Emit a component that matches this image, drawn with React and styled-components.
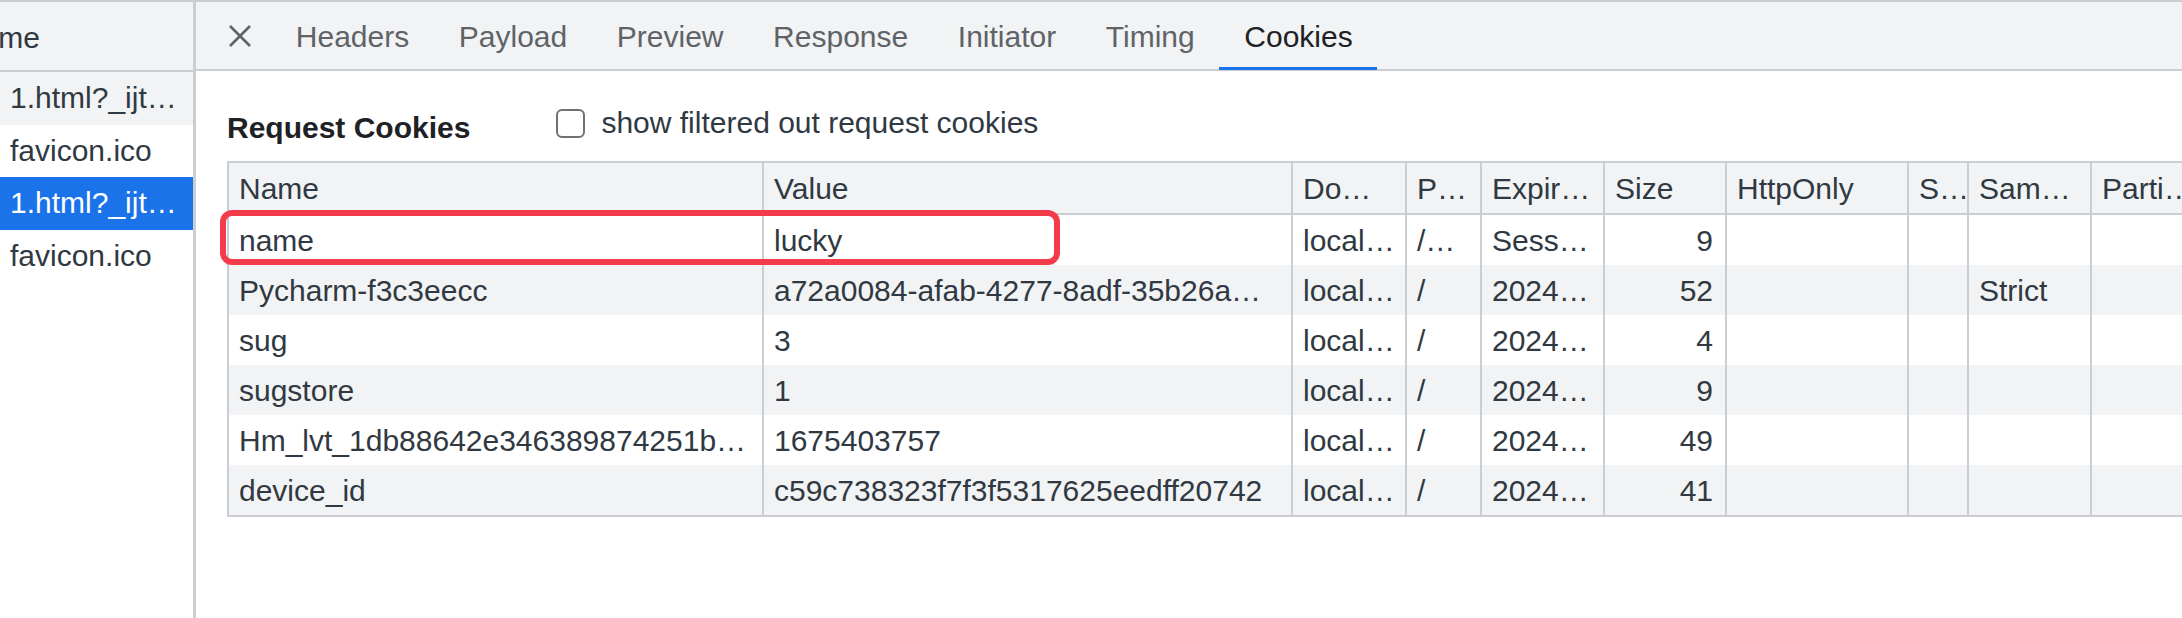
import React from 'react'
import styled, { createGlobalStyle, css } from 'styled-components'

const GlobalStyle = createGlobalStyle`
  html, body {
    margin: 0;
    padding: 0;
    background: #ffffff;
  }
  body {
    font-family: "Liberation Sans", Arial, sans-serif;
    color: #303942;
  }
`

const BORDER = '#cacdd1'
const SURFACE = '#f1f3f4'
const BLUE = '#1a73e8'
const COLUMNS = '535px 529px 114px 75px 123px 122px 182px 60px 123px 123px'

const Window = styled.div`
  display: flex;
  height: 618px;
  border-top: 2px solid ${BORDER};
  box-sizing: border-box;
  overflow: hidden;
  font-size: 30px;
`

const RequestList = styled.div`
  width: 193px;
  flex-shrink: 0;
  border-right: 3px solid ${BORDER};
  overflow: hidden;
`

const ListHeader = styled.div`
  height: 68px;
  display: flex;
  align-items: center;
  background: ${SURFACE};
  border-bottom: 2px solid ${BORDER};
  white-space: nowrap;
  span {
    margin-left: -40px;
    padding-top: 3px;
  }
`

const ListRow = styled.div`
  height: 52.5px;
  display: flex;
  align-items: center;
  padding: 0 10px;
  white-space: nowrap;
  overflow: hidden;
  background: ${p => (p.$state === 'hover' ? SURFACE : p.$state === 'selected' ? BLUE : '#fff')};
  color: ${p => (p.$state === 'selected' ? '#fff' : '#303942')};
`

const Main = styled.div`
  flex: 1;
  min-width: 0;
  display: flex;
  flex-direction: column;
`

const TabBar = styled.div`
  height: 67px;
  display: flex;
  align-items: stretch;
  padding-left: 32px;
  background: ${SURFACE};
  border-bottom: 2px solid ${BORDER};
`

const CloseButton = styled.div`
  display: flex;
  align-items: center;
  margin-right: 19px;
  color: #5f6368;
`

const Tab = styled.div`
  position: relative;
  display: flex;
  align-items: center;
  padding: 3px 24.8px 0;
  color: #5f6368;
  white-space: nowrap;
  ${p =>
    p.$active &&
    css`
      color: #202124;
      &::after {
        content: '';
        position: absolute;
        left: 0;
        right: 0;
        bottom: -1px;
        height: 3px;
        background: ${BLUE};
      }
    `}
`

const Panel = styled.div`
  flex: 1;
  padding-left: 31px;
  overflow: hidden;
`

const TitleRow = styled.div`
  display: flex;
  align-items: flex-start;
  height: 41px;
  margin-top: 34px;
`

const Title = styled.h2`
  margin: 5px 0 0;
  font-size: 30px;
  line-height: 36px;
  font-weight: bold;
  color: #202124;
  white-space: nowrap;
`

const FilterLabel = styled.label`
  display: flex;
  align-items: center;
  gap: 16px;
  margin-left: 86px;
  line-height: 36px;
  white-space: nowrap;
`

const CheckBox = styled.span`
  width: 29px;
  height: 29px;
  box-sizing: border-box;
  border: 2.5px solid #717171;
  border-radius: 6px;
  background: #fff;
`

const CookieTable = styled.div`
  position: relative;
  width: max-content;
  margin-top: 15px;
  border-top: 2px solid ${BORDER};
  border-bottom: 2px solid ${BORDER};
  border-left: 2px solid ${BORDER};
`

const GridRow = styled.div`
  display: grid;
  grid-template-columns: ${COLUMNS};
  height: 50px;
  background: ${p => (p.$striped ? SURFACE : '#fff')};
  ${p =>
    p.$header &&
    css`
      background: ${SURFACE};
      border-bottom: 2px solid ${BORDER};
    `}
`

const Cell = styled.div`
  display: flex;
  align-items: center;
  justify-content: ${p => (p.$right ? 'flex-end' : 'flex-start')};
  padding: ${p => (p.$right ? '0 12px 0 10px' : '0 8px 0 10px')};
  border-right: 2px solid ${BORDER};
  box-sizing: border-box;
  min-width: 0;
  overflow: hidden;
  white-space: nowrap;
  padding-top: 2px;
`

const Highlight = styled.div`
  position: absolute;
  left: -9px;
  top: 47px;
  width: 840px;
  height: 55px;
  box-sizing: border-box;
  border: 6px solid #f43b4b;
  border-radius: 12px;
  pointer-events: none;
`

const requests = [
  { label: '1.html?_ijt…', state: 'hover' },
  { label: 'favicon.ico' },
  { label: '1.html?_ijt…', state: 'selected' },
  { label: 'favicon.ico' },
]

const tabs = ['Headers', 'Payload', 'Preview', 'Response', 'Initiator', 'Timing', 'Cookies']

const headers = ['Name', 'Value', 'Do…', 'P…', 'Expir…', 'Size', 'HttpOnly', 'S…', 'Sam…', 'Parti…']

const cookies = [
  ['name', 'lucky', 'local…', '/…', 'Sess…', '9', '', '', '', ''],
  ['Pycharm-f3c3eecc', 'a72a0084-afab-4277-8adf-35b26a…', 'local…', '/', '2024…', '52', '', '', 'Strict', ''],
  ['sug', '3', 'local…', '/', '2024…', '4', '', '', '', ''],
  ['sugstore', '1', 'local…', '/', '2024…', '9', '', '', '', ''],
  ['Hm_lvt_1db88642e346389874251b…', '1675403757', 'local…', '/', '2024…', '49', '', '', '', ''],
  ['device_id', 'c59c738323f7f3f5317625eedff20742', 'local…', '/', '2024…', '41', '', '', '', ''],
]

function CloseIcon() {
  return (
    <svg width="24" height="24" viewBox="0 0 24 24" fill="none">
      <path d="M2 2L22 22M22 2L2 22" stroke="currentColor" strokeWidth="2.6" />
    </svg>
  )
}

export default function App() {
  return (
    <>
      <GlobalStyle />
      <Window>
        <RequestList>
          <ListHeader>
            <span>Name</span>
          </ListHeader>
          {requests.map((r, i) => (
            <ListRow key={i} $state={r.state}>
              {r.label}
            </ListRow>
          ))}
        </RequestList>

        <Main>
          <TabBar>
            <CloseButton>
              <CloseIcon />
            </CloseButton>
            {tabs.map(t => (
              <Tab key={t} $active={t === 'Cookies'}>
                {t}
              </Tab>
            ))}
          </TabBar>

          <Panel>
            <TitleRow>
              <Title>Request Cookies</Title>
              <FilterLabel>
                <CheckBox />
                show filtered out request cookies
              </FilterLabel>
            </TitleRow>

            <CookieTable>
              <GridRow $header>
                {headers.map((h, i) => (
                  <Cell key={i}>{h}</Cell>
                ))}
              </GridRow>
              {cookies.map((row, r) => (
                <GridRow key={r} $striped={r % 2 === 1}>
                  {row.map((value, c) => (
                    <Cell key={c} $right={c === 5}>
                      {value}
                    </Cell>
                  ))}
                </GridRow>
              ))}
              <Highlight />
            </CookieTable>
          </Panel>
        </Main>
      </Window>
    </>
  )
}
